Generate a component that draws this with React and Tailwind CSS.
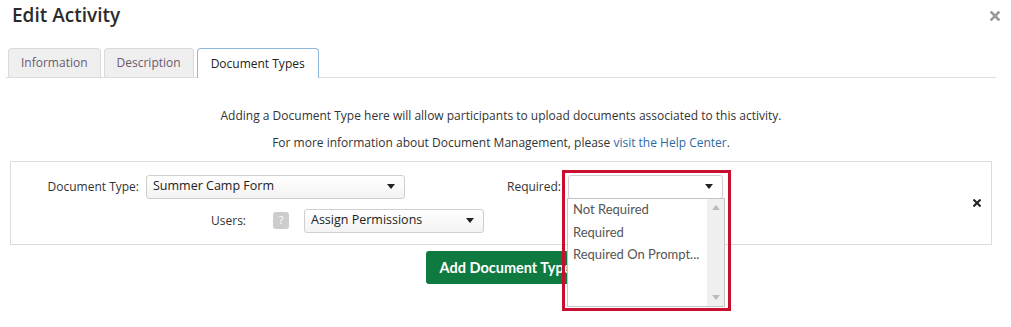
import React from 'react';

function Caret() {
  return (
    <svg width="8" height="5" viewBox="0 0 8 5" className="shrink-0">
      <path d="M0 0h8L4 5z" fill="#222" />
    </svg>
  );
}

function Times({ color, size = 9 }) {
  return (
    <svg width={size} height={size} viewBox="0 0 10 10">
      <path d="M1.5 1.5l7 7M8.5 1.5l-7 7" stroke={color} strokeWidth="2.6" strokeLinecap="square" />
    </svg>
  );
}

function Select({ value, className }) {
  return (
    <div className={`flex items-center justify-between h-[24px] pl-[6px] pr-[9px] border border-[#cfcfcf] rounded-[3px] bg-gradient-to-b from-white to-[#f3f3f3] text-[12.5px] text-[#222] ${className}`}>
      <span>{value}</span>
      <Caret />
    </div>
  );
}

export default function App() {
  const tabs = ['Information', 'Description', 'Document Types'];
  const options = ['Not Required', 'Required', 'Required On Prompt...'];

  return (
    <div className="w-[1011px] h-[327px] bg-white font-['Open_Sans',sans-serif] text-[#333] overflow-hidden">
      <div className="flex items-center justify-between pl-[12px] pr-[11px] h-[31px]">
        <h1 className="text-[19px] font-semibold text-[#2b2b2b]">Edit Activity</h1>
        <Times color="#999" size={10} />
      </div>

      <div className="flex gap-[3px] mt-[17px] ml-[6px] mr-[15px] pl-[2px] border-b border-[#dcdcdc] h-[30px] items-end">
        {tabs.map((t, i) => (
          <div
            key={t}
            className={
              i === 2
                ? 'h-[30px] mb-[-1px] px-[13px] flex items-center bg-white border border-b-0 border-[#8fb7da] rounded-t-[4px] text-[12px] text-[#222]'
                : 'h-[29px] px-[12px] flex items-center bg-[#efefef] border border-b-0 border-[#dadada] rounded-t-[4px] text-[12px] text-[#6b5a6e]'
            }
          >
            {t}
          </div>
        ))}
      </div>

      <div className="text-center text-[12px] text-[#333] mt-[29px] mr-[9px] leading-[17px]">
        <p>Adding a Document Type here will allow participants to upload documents associated to this activity.</p>
        <p className="mt-[10px]">
          For more information about Document Management, please <span className="text-[#2d6a9f]">visit the Help Center</span>.
        </p>
      </div>

      <div className="mt-[10px] ml-[10px] w-[982px] h-[84px] border border-[#dcdcdc] flex items-center pr-[10px]">
        <div className="flex-1 flex flex-col gap-[10px] pt-[1px]">
          <div className="flex items-center">
            <div className="w-[128px] text-right text-[12px] text-[#333]">Document Type:</div>
            <Select value="Summer Camp Form" className="ml-[7px] w-[259px]" />
            <div className="w-[156px] text-right text-[12px] text-[#333]">Required:</div>
            <div className="relative ml-[7px]">
              <div className="flex items-center justify-end h-[24px] w-[155px] pr-[9px] border border-[#cfcfcf] rounded-[3px] bg-white">
                <Caret />
              </div>
              <div className="absolute left-[-1px] top-[23px] w-[158px] h-[109px] bg-white border border-[#c4c4c4] flex font-['Lato',sans-serif] text-[13px] text-[#555] z-10">
                <div className="flex-1 flex flex-col pl-[5px]">
                  {options.map((o) => (
                    <div key={o} className="h-[22.5px] flex items-center">{o}</div>
                  ))}
                </div>
                <div className="w-[17px] bg-[#f0f0f0] flex flex-col items-center justify-between py-[6px]">
                  <svg width="8" height="5" viewBox="0 0 8 5"><path d="M0 5h8L4 0z" fill="#bbb" /></svg>
                  <svg width="8" height="5" viewBox="0 0 8 5"><path d="M0 0h8L4 5z" fill="#bbb" /></svg>
                </div>
              </div>
              <div className="absolute left-[-6px] top-[-5px] w-[169px] h-[141px] border-[3px] border-[#c8102e] z-20 pointer-events-none" />
            </div>
          </div>
          <div className="flex items-center">
            <div className="w-[235px] text-right text-[12px] text-[#333]">Users:</div>
            <div className="ml-[27px] w-[16px] h-[17px] rounded-[3px] bg-[#cdcdcd] text-white text-[11px] flex items-center justify-center">?</div>
            <Select value="Assign Permissions" className="ml-[15px] w-[180px]" />
          </div>
        </div>
        <Times color="#222" size={8} />
      </div>

      <div className="flex justify-center mt-[6px]">
        <button className="h-[33px] px-[14px] rounded-[3px] bg-[#0f7a3f] text-white font-['Lato',sans-serif] font-bold text-[14.5px]">
          Add Document Type
        </button>
      </div>
    </div>
  );
}
